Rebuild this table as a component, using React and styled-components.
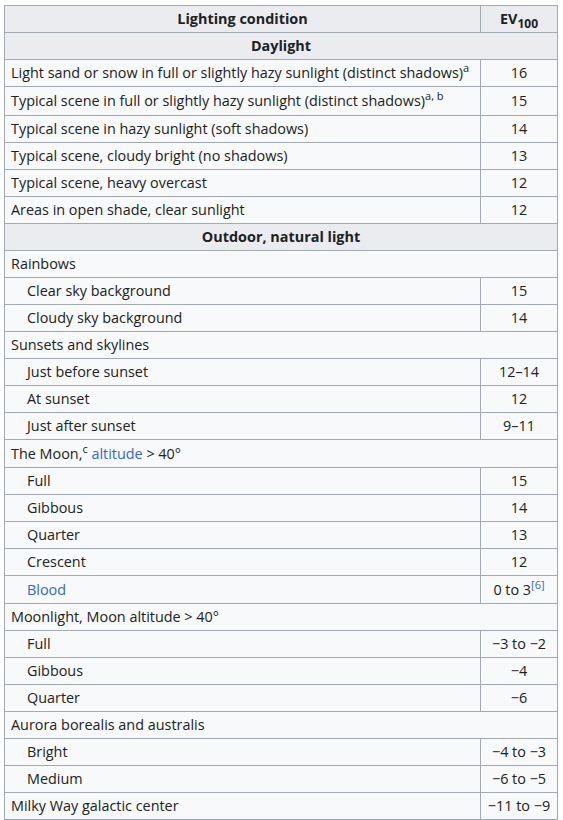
import React from "react";
import styled, { createGlobalStyle } from "styled-components";

const GlobalStyle = createGlobalStyle`
  html, body {
    margin: 0;
    padding: 0;
    background: #fff;
  }
  body {
    font-family: "Open Sans", "Noto Sans", sans-serif;
    color: #202122;
  }
`;

const Page = styled.div`
  padding: 5px 5px 0 4px;
`;

const Table = styled.table`
  width: 554px;
  border-collapse: collapse;
  background: #f8f9fa;
  border: 1px solid #a2a9b1;
  font-size: 14.4px;
  line-height: 20px;
  color: #202122;
`;

const Th = styled.th`
  background: #eaecf0;
  border: 1px solid #a2a9b1;
  padding: 3px 6px;
  font-weight: bold;
  text-align: center;
  height: 20px;
`;

const Td = styled.td`
  border: 1px solid #a2a9b1;
  padding: 3px 6px 3px ${(p) => (p.$indent ? "22px" : "6px")};
  text-align: ${(p) => (p.$center ? "center" : "left")};
  height: ${(p) => p.$h || 20}px;
  white-space: nowrap;
`;

// line-height 0 keeps the raised text from stretching the row
const Sup = styled.sup`
  font-size: 11px;
  line-height: 0;
  vertical-align: 6px;
`;

const Sub = styled.sub`
  font-size: 12px;
  line-height: 0;
  vertical-align: -4px;
`;

const Link = styled.a`
  color: #3366cc;
  text-decoration: none;
`;

const rows = [
  { section: "Daylight" },
  { label: <>Light sand or snow in full or slightly hazy sunlight (distinct shadows)<Sup>a</Sup></>, ev: "16" },
  { label: <>Typical scene in full or slightly hazy sunlight (distinct shadows)<Sup>a, b</Sup></>, ev: "15", h: 22 },
  { label: "Typical scene in hazy sunlight (soft shadows)", ev: "14" },
  { label: "Typical scene, cloudy bright (no shadows)", ev: "13" },
  { label: "Typical scene, heavy overcast", ev: "12" },
  { label: "Areas in open shade, clear sunlight", ev: "12" },
  { section: "Outdoor, natural light" },
  { group: "Rainbows" },
  { label: "Clear sky background", ev: "15", indent: true },
  { label: "Cloudy sky background", ev: "14", indent: true },
  { group: "Sunsets and skylines" },
  { label: "Just before sunset", ev: "12–14", indent: true },
  { label: "At sunset", ev: "12", indent: true },
  { label: "Just after sunset", ev: "9–11", indent: true },
  { group: <>The Moon,<Sup>c</Sup> <Link href="#">altitude</Link> &gt; 40°</>, h: 21 },
  { label: "Full", ev: "15", indent: true },
  { label: "Gibbous", ev: "14", indent: true },
  { label: "Quarter", ev: "13", indent: true },
  { label: "Crescent", ev: "12", indent: true },
  { label: <Link href="#">Blood</Link>, ev: <>0 to 3<Sup><Link href="#">[6]</Link></Sup></>, indent: true, h: 21 },
  { group: "Moonlight, Moon altitude > 40°" },
  { label: "Full", ev: "−3 to −2", indent: true },
  { label: "Gibbous", ev: "−4", indent: true },
  { label: "Quarter", ev: "−6", indent: true },
  { group: "Aurora borealis and australis" },
  { label: "Bright", ev: "−4 to −3", indent: true },
  { label: "Medium", ev: "−6 to −5", indent: true },
  { label: "Milky Way galactic center", ev: "−11 to −9" },
];

export default function App() {
  return (
    <Page>
      <GlobalStyle />
      <Table>
        <thead>
          <tr>
            <Th>Lighting condition</Th>
            <Th style={{ width: 64 }}>
              EV<Sub>100</Sub>
            </Th>
          </tr>
        </thead>
        <tbody>
          {rows.map((r, i) => {
            if (r.section) {
              return (
                <tr key={i}>
                  <Th colSpan={2}>{r.section}</Th>
                </tr>
              );
            }
            if (r.group) {
              return (
                <tr key={i}>
                  <Td colSpan={2} $h={r.h}>{r.group}</Td>
                </tr>
              );
            }
            return (
              <tr key={i}>
                <Td $indent={r.indent} $h={r.h}>{r.label}</Td>
                <Td $center $h={r.h}>{r.ev}</Td>
              </tr>
            );
          })}
        </tbody>
      </Table>
    </Page>
  );
}
